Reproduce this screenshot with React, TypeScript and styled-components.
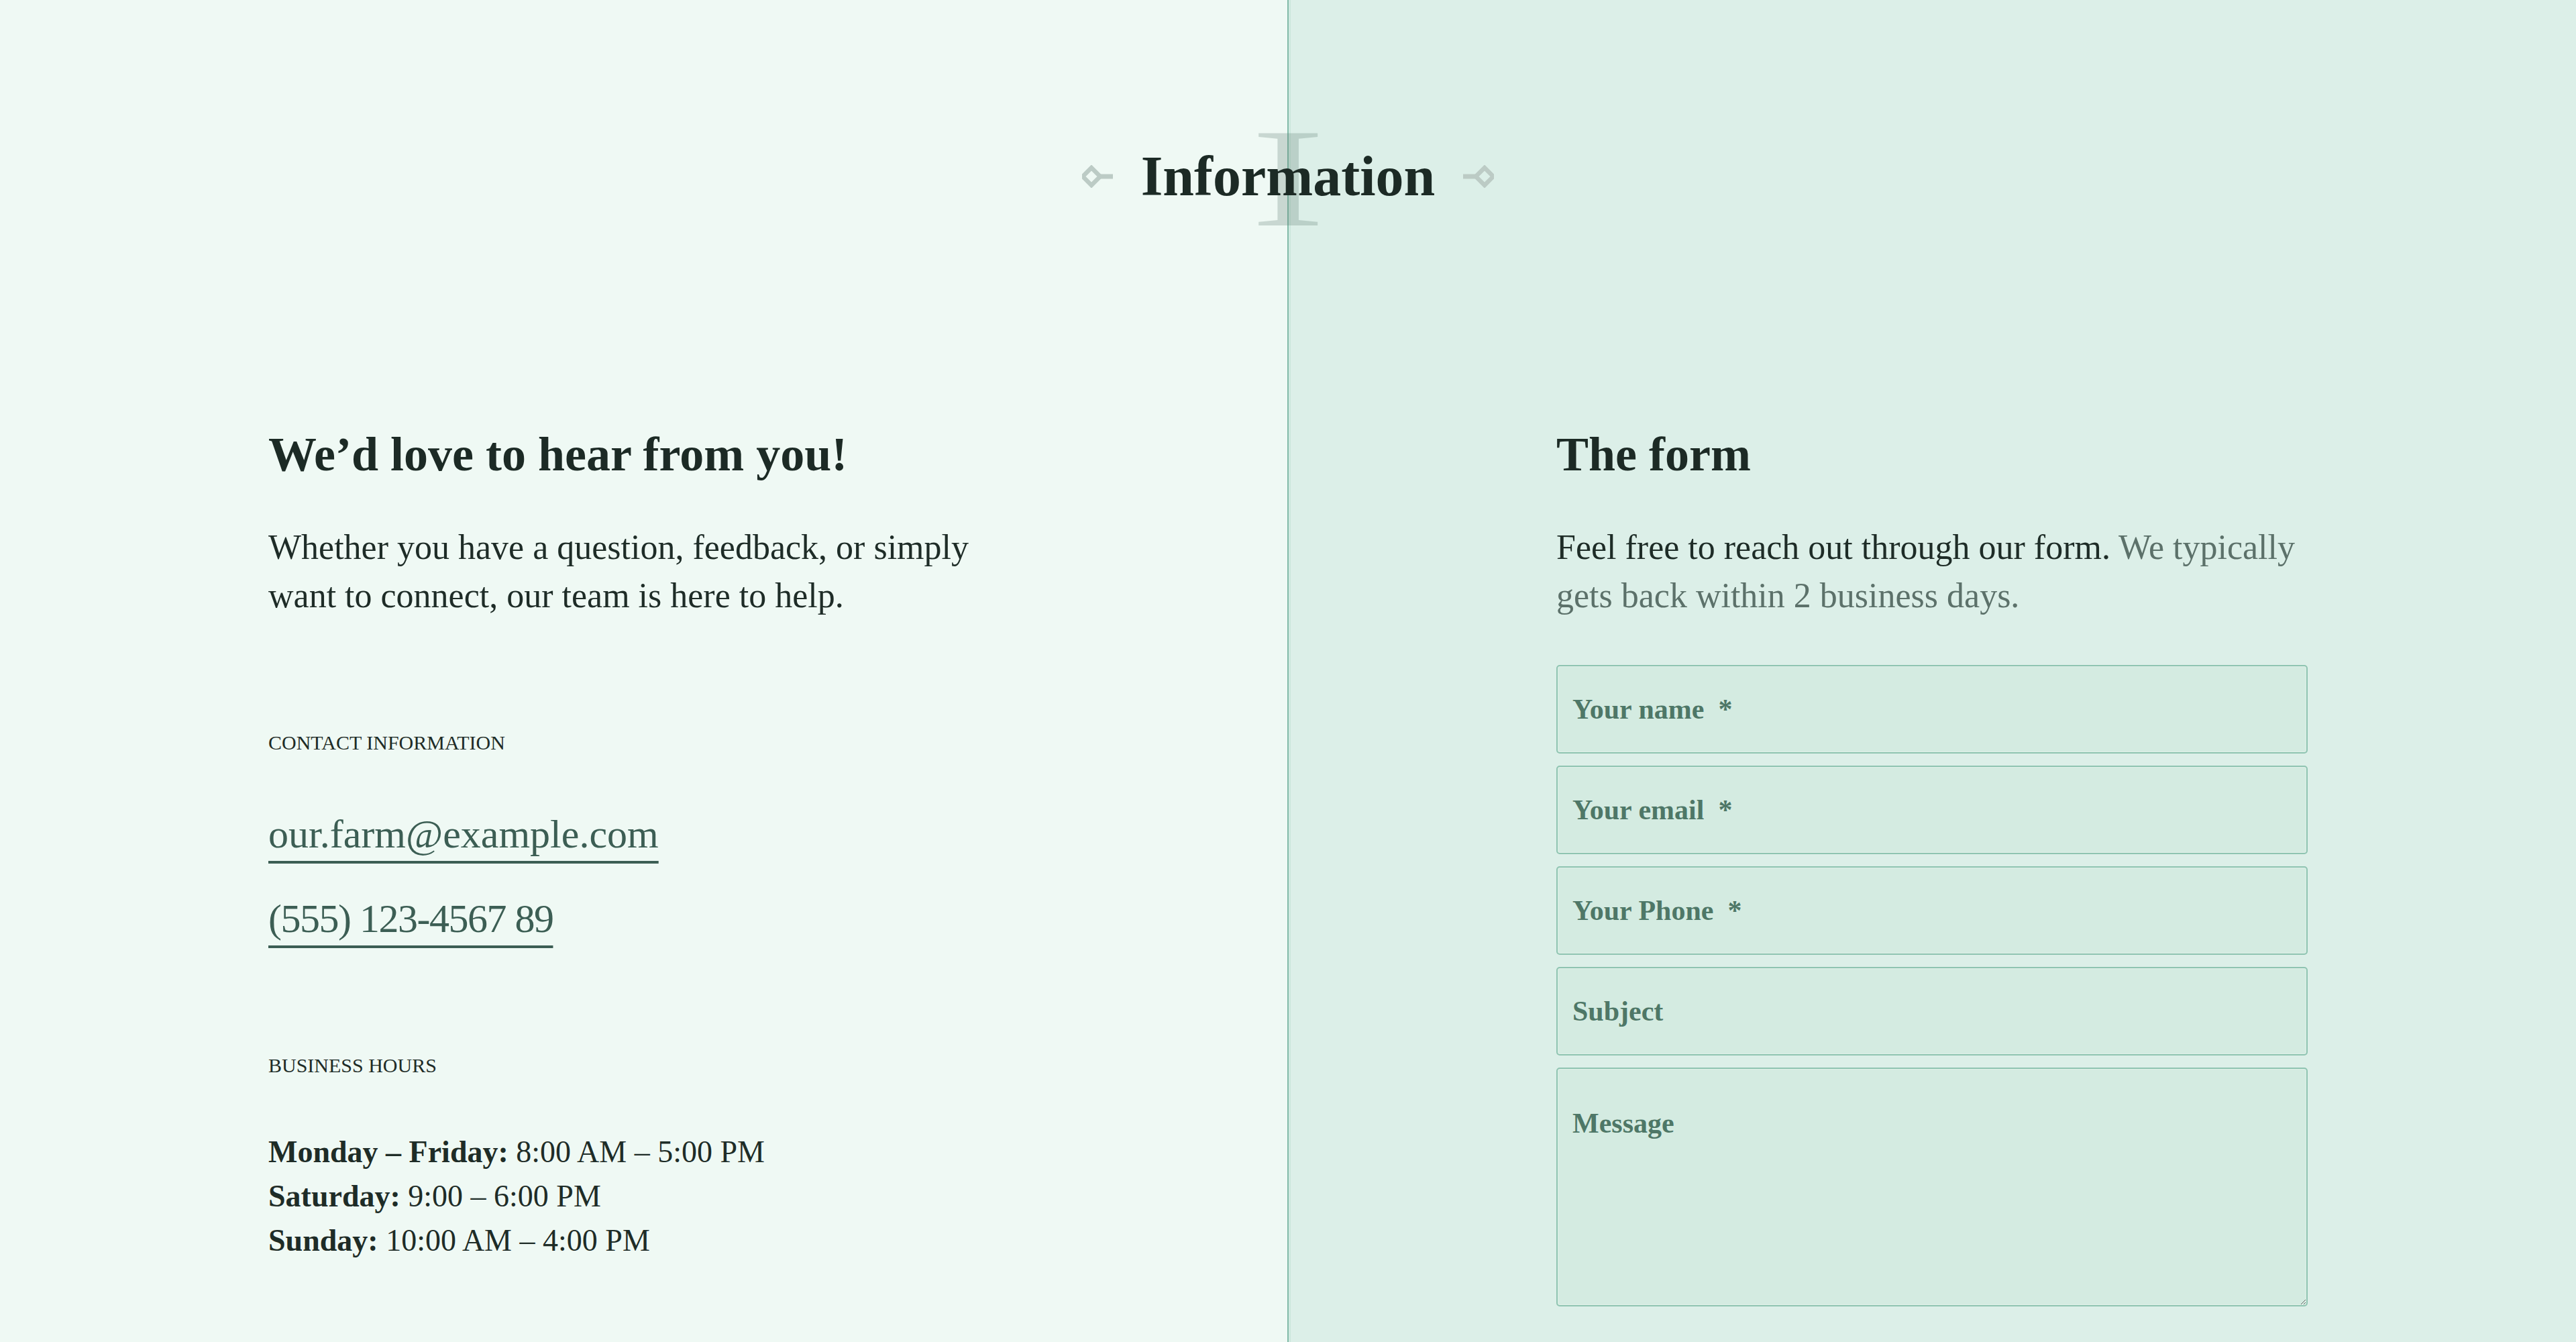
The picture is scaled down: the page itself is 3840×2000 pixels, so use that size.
import React from "react";
import styled, { createGlobalStyle } from "styled-components";

const GlobalStyle = createGlobalStyle`
  html, body {
    margin: 0;
    padding: 0;
  }
  body {
    font-family: "Liberation Serif", "Times New Roman", serif;
    color: #1e2c27;
  }
  * {
    box-sizing: border-box;
  }
`;

const Page = styled.div`
  position: relative;
  min-height: 2000px;
  padding-bottom: 53px;
  background: linear-gradient(90deg, #eff9f4 50%, #dcefe8 50%);

  &::before {
    content: "";
    position: absolute;
    top: 0;
    bottom: 0;
    left: calc(50% - 1px);
    width: 2px;
    background: #7fb9a6;
    box-shadow: 3px 0 0 0 #cbe7dc;
  }
`;

const Header = styled.header`
  position: relative;
  z-index: 1;
  display: flex;
  justify-content: center;
  align-items: center;
  gap: 42px;
  padding-top: 213px;
`;

const OrnamentSvg = styled.svg<{ $flip?: boolean }>`
  display: block;
  transform: ${(p) => (p.$flip ? "scaleX(-1)" : "none")};
`;

const TitleWrap = styled.div`
  position: relative;
`;

const BigLetter = styled.span`
  position: absolute;
  left: 50%;
  top: 50%;
  transform: translate(-50%, -49%) scaleX(1.6);
  font-size: 210px;
  line-height: 1;
  font-weight: 400;
  color: rgba(88, 120, 108, 0.26);
  pointer-events: none;
`;

const Title = styled.h1`
  position: relative;
  margin: 0;
  font-size: 84px;
  line-height: 100px;
  font-weight: 700;
  color: #1c2a25;
`;

const Columns = styled.main`
  position: relative;
  z-index: 1;
  display: grid;
  grid-template-columns: 1fr 1fr;
  margin-top: 321px;
`;

const Column = styled.section`
  display: flex;
  flex-direction: column;
  width: 1120px;
  margin: 0 auto;
`;

const Heading = styled.h2`
  margin: 0;
  font-size: 72px;
  line-height: 86px;
  font-weight: 700;
  color: #1c2a25;
`;

const Lead = styled.p`
  margin: 60px 0 0;
  font-size: 52px;
  line-height: 72px;
  color: #1e2c27;
`;

const Muted = styled.span`
  color: #5c716a;
`;

const Label = styled.h3<{ $gap: number }>`
  margin: ${(p) => p.$gap}px 0 0;
  font-size: 30px;
  line-height: 36px;
  font-weight: 400;
  text-transform: uppercase;
  color: #1e2c27;
`;

const ContactLink = styled.a<{ $gap: number; $tight?: boolean }>`
  align-self: flex-start;
  margin-top: ${(p) => p.$gap}px;
  font-size: 60px;
  line-height: 72px;
  letter-spacing: ${(p) => (p.$tight ? "-1.5px" : "0")};
  color: #3c5e54;
  text-decoration: underline;
  text-decoration-thickness: 4px;
  text-underline-offset: 20px;
`;

const HoursList = styled.div`
  margin-top: 78px;
  display: flex;
  flex-direction: column;
`;

const HoursRow = styled.p`
  margin: 0;
  font-size: 46px;
  line-height: 66px;
  color: #1e2c27;

  strong {
    font-weight: 700;
  }
`;

const Form = styled.form`
  display: flex;
  flex-direction: column;
  gap: 18px;
  margin-top: 67px;
`;

const fieldStyle = `
  width: 100%;
  font-family: "Liberation Serif", "Times New Roman", serif;
  font-size: 42px;
  font-weight: 700;
  color: #2f4e44;
  background: #d4ebe1;
  border: 2px solid #8fc4b1;
  border-radius: 5px;
  box-shadow: inset 0 0 0 1px rgba(255, 255, 255, 0.25);
  outline: none;

  &::placeholder {
    color: #4e7767;
    opacity: 1;
  }
`;

const Field = styled.input`
  ${fieldStyle}
  height: 132px;
  padding: 0 22px;
`;

const MessageField = styled.textarea`
  ${fieldStyle}
  display: block;
  height: 356px;
  padding: 56px 22px 20px;
  line-height: 50px;
  resize: vertical;
`;

function Ornament({ flip }: { flip?: boolean }) {
  return (
    <OrnamentSvg $flip={flip} width="46" height="34" viewBox="0 0 46 34" aria-hidden="true">
      <polygon points="14,4 27,17 14,30 1,17" fill="none" stroke="#bccbc5" strokeWidth="6.5" strokeLinejoin="miter" />
      <line x1="27" y1="17" x2="46" y2="17" stroke="#bccbc5" strokeWidth="7" />
    </OrnamentSvg>
  );
}

const hours = [
  { day: "Monday – Friday:", time: "8:00 AM – 5:00 PM" },
  { day: "Saturday:", time: "9:00 – 6:00 PM" },
  { day: "Sunday:", time: "10:00 AM – 4:00 PM" },
];

export default function App() {
  return (
    <>
      <GlobalStyle />
      <Page>
        <Header>
          <Ornament />
          <TitleWrap>
            <BigLetter aria-hidden="true">I</BigLetter>
            <Title>Information</Title>
          </TitleWrap>
          <Ornament flip />
        </Header>

        <Columns>
          <Column>
            <Heading>We’d love to hear from you!</Heading>
            <Lead>
              Whether you have a question, feedback, or simply want to connect, our team is here to help.
            </Lead>

            <Label $gap={165}>Contact information</Label>
            <ContactLink $gap={82} href="#">our.farm@example.com</ContactLink>
            <ContactLink $gap={54} $tight href="#">(555) 123-4567 89</ContactLink>

            <Label $gap={165}>Business hours</Label>
            <HoursList>
              {hours.map((h) => (
                <HoursRow key={h.day}>
                  <strong>{h.day}</strong> {h.time}
                </HoursRow>
              ))}
            </HoursList>
          </Column>

          <Column>
            <Heading>The form</Heading>
            <Lead>
              Feel free to reach out through our form. <Muted>We typically gets back within 2 business days.</Muted>
            </Lead>
            <Form onSubmit={(e) => e.preventDefault()}>
              <Field type="text" placeholder={"Your name\u00a0\u00a0*"} />
              <Field type="email" placeholder={"Your email\u00a0\u00a0*"} />
              <Field type="tel" placeholder={"Your Phone\u00a0\u00a0*"} />
              <Field type="text" placeholder="Subject" />
              <MessageField placeholder="Message" />
            </Form>
          </Column>
        </Columns>
      </Page>
    </>
  );
}
